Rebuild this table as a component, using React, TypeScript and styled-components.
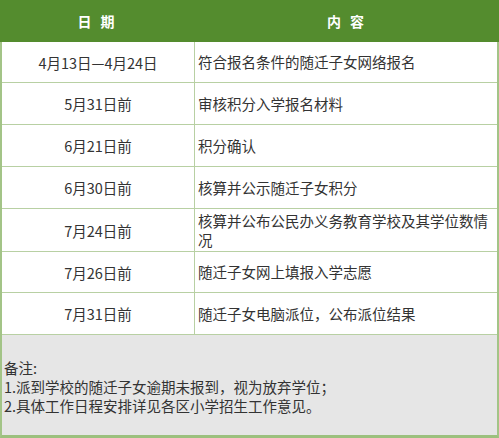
import React from 'react';
import styled, { createGlobalStyle } from 'styled-components';

const GlobalStyle = createGlobalStyle`
  html, body {
    margin: 0;
    padding: 0;
    background: #ffffff;
  }
  body {
    font-family: "Noto Sans CJK SC", "Noto Sans", sans-serif;
    color: #333333;
  }
`;

interface Row {
  date: string;
  content: string;
  tall?: boolean;
}

const rows: Row[] = [
  { date: '4月13日—4月24日', content: '符合报名条件的随迁子女网络报名' },
  { date: '5月31日前', content: '审核积分入学报名材料' },
  { date: '6月21日前', content: '积分确认' },
  { date: '6月30日前', content: '核算并公示随迁子女积分' },
  { date: '7月24日前', content: '核算并公布公民办义务教育学校及其学位数情况', tall: true },
  { date: '7月26日前', content: '随迁子女网上填报入学志愿' },
  { date: '7月31日前', content: '随迁子女电脑派位，公布派位结果' },
];

const App: React.FC = () => {
  return (
    <>
      <GlobalStyle />
      <Table>
        <HeadCell>日 期</HeadCell>
        <HeadCell $last>内 容</HeadCell>
        {rows.map((r) => (
          <React.Fragment key={r.date}>
            <DateCell>{r.date}</DateCell>
            <ContentCell $tall={r.tall}>{r.content}</ContentCell>
          </React.Fragment>
        ))}
        <Notes>
          <p>备注:</p>
          <p>1.派到学校的随迁子女逾期未报到，视为放弃学位；</p>
          <p>2.具体工作日程安排详见各区小学招生工作意见。</p>
        </Notes>
      </Table>
    </>
  );
};

const Table = styled.div`
  box-sizing: border-box;
  width: 499px;
  height: 438px;
  display: grid;
  grid-template-columns: 193px 1fr;
  grid-template-rows: 42px 41px 42px 42px 42px 43px 41px 42px 1fr;
  border-left: 2px solid #a3c487;
  border-right: 2px solid #a3c487;
  border-bottom: 3px solid #9cc07e;
  font-size: 14.5px;
`;

const HeadCell = styled.div<{ $last?: boolean }>`
  display: flex;
  align-items: center;
  justify-content: center;
  background: #548c2e;
  color: #ffffff;
  font-weight: 700;
  font-size: 14px;
  letter-spacing: 3px;
  margin-left: ${(p) => (p.$last ? '0' : '-2px')};
  margin-right: ${(p) => (p.$last ? '-2px' : '0')};
`;

const DateCell = styled.div`
  display: flex;
  align-items: center;
  justify-content: center;
  border-bottom: 1px solid #b8d0a3;
  border-right: 1px solid #b8d0a3;
  box-sizing: border-box;
  background: #ffffff;
`;

const ContentCell = styled.div<{ $tall?: boolean }>`
  display: flex;
  align-items: center;
  box-sizing: border-box;
  padding: 0 2px 0 3px;
  border-bottom: 1px solid #b8d0a3;
  line-height: ${(p) => (p.$tall ? '19px' : '20px')};
  background: #ffffff;
`;

const Notes = styled.div`
  grid-column: 1 / -1;
  background: #e6e6e6;
  padding: 23px 0 0 2px;
  font-size: 14.5px;
  line-height: 19px;
  color: #333333;

  p {
    margin: 0;
  }
`;

export default App;
